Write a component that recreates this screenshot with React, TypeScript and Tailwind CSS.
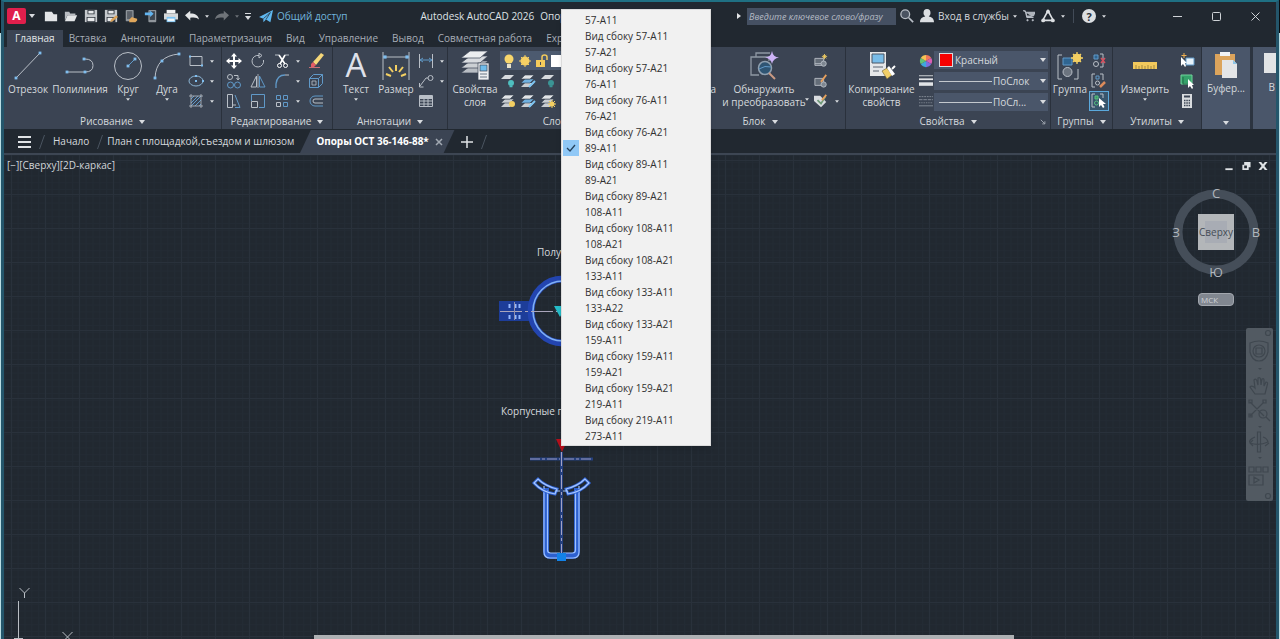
import React from 'react';

const BLUE = '#6099c8';
const LIGHT = '#b9bfc7';

const Caret: React.FC<{ className?: string }> = ({ className = 'w-1.5 h-1' }) => (
  <svg className={`shrink-0 ${className}`} viewBox="0 0 6 4" fill="#d8dbdf">
    <path d="M0 0h6L3 4z" />
  </svg>
);

const Dot: React.FC = () => <Caret className="w-1 h-[3px]" />;

const Icon: React.FC<{ size?: string; box?: number; children: React.ReactNode }> = ({
  size = 'w-4 h-4',
  box = 16,
  children,
}) => (
  <svg className={`shrink-0 ${size}`} viewBox={`0 0 ${box} ${box}`} fill="none" stroke={LIGHT} strokeWidth="1">
    {children}
  </svg>
);

const Big: React.FC<{ children: React.ReactNode }> = ({ children }) => (
  <Icon size="w-[30px] h-[30px]" box={30}>
    {children}
  </Icon>
);

const Points: React.FC<{ at: number[][]; r?: number }> = ({ at, r = 1.4 }) => (
  <g fill="#7fbdee" stroke="none">
    {at.map(([x, y]) => (
      <rect key={`${x}-${y}`} x={x - r} y={y - r} width={r * 2} height={r * 2} />
    ))}
  </g>
);

const Sheets: React.FC<{ blue?: boolean; children?: React.ReactNode }> = ({ blue, children }) => (
  <Icon>
    <g stroke="none">
      <path d="M5 10h9l-4 4H1z" fill="#c9cdd2" />
      <path d="M5 6h9l-4 4H1z" fill={blue ? '#6fb0e0' : '#c9cdd2'} stroke="#3b4453" strokeWidth=".6" />
      <path d="M5 2h9l-4 4H1z" fill="#e1e4e7" stroke="#3b4453" strokeWidth=".6" />
    </g>
    {children}
  </Icon>
);

const Flat: React.FC<{ color: string }> = ({ color }) => (
  <Icon>
    <path d="M5 2h9l-4 4H1z" fill="#d6d9dd" stroke="none" />
    <circle cx="11" cy="10" r="3" fill={color} stroke="none" />
    <path d="M9.500 13.500h3" stroke={color} strokeWidth="1.500" />
  </Icon>
);

interface PanelProps {
  title: string;
  className?: string;
  launcher?: boolean;
  children: React.ReactNode;
}

const Panel: React.FC<PanelProps> = ({ title, className = '', launcher, children }) => (
  <section className={`relative flex shrink-0 flex-col border-r border-[#2a313c] bg-[#3b4453] ${className}`}>
    <div className="flex h-[67px] items-start pt-1">{children}</div>
    <button className="flex h-[15px] items-center justify-center gap-1.5 leading-[15px]">
      {title}
      <Caret />
    </button>
    {launcher && (
      <svg className="absolute right-1 bottom-1 h-1.5 w-1.5" viewBox="0 0 8 8" stroke={LIGHT} fill="none">
        <path d="M1 1l5 5M6.500 3v3.500H3" />
      </svg>
    )}
  </section>
);

interface BigButtonProps {
  label: string;
  second?: string;
  caret?: boolean;
  className: string;
  children?: React.ReactNode;
}

const BigButton: React.FC<BigButtonProps> = ({ label, second, caret, className, children }) => (
  <button className={`flex shrink-0 flex-col items-center whitespace-nowrap ${className}`}>
    {children}
    <span className="mt-0.5 leading-[13px]">{label}</span>
    {second && <span className="leading-[13px]">{second}</span>}
    {caret && (
      <span className="mt-0.5">
        <Dot />
      </span>
    )}
  </button>
);

const Cell: React.FC<{ label: string; className?: string; children: React.ReactNode }> = ({
  label,
  className = 'w-6',
  children,
}) => (
  <button aria-label={label} className={`flex h-5 items-center justify-center ${className}`}>
    {children}
  </button>
);

const ColumnCaret: React.FC<{ count?: number }> = ({ count = 3 }) => (
  <div className="flex w-2 shrink-0 flex-col">
    {Array.from({ length: count }).map((_, i) => (
      <span key={i} className="flex h-5 items-center justify-center">
        <Dot />
      </span>
    ))}
  </div>
);

const quickAccess = [
  {
    label: 'Новый',
    icon: <path d="M1 3h8l2 3h4v8H1z" fill="#e3e5e7" stroke="none" />,
  },
  {
    label: 'Открыть',
    icon: (
      <g stroke="none">
        <path d="M1 3h5l1 2h6v2H4l-3 6z" fill="#b9bdc2" />
        <path d="M4 7h11l-3 7H1z" fill="#e3e5e7" />
      </g>
    ),
  },
  {
    label: 'Сохранить',
    icon: (
      <g stroke="none">
        <path d="M1 1h14v14H1z" fill="#c5c9cd" />
        <path d="M4 1h8v5H4zM3 9h10v6H3z" fill="#2b323b" />
        <path d="M5 2h6v3H5zM4 10h8v4H4z" fill="#e8eaec" />
      </g>
    ),
  },
  {
    label: 'Сохранить как',
    icon: (
      <g stroke="none">
        <path d="M1 1h14v14H1z" fill="#c5c9cd" />
        <path d="M4 1h8v5H4zM3 9h10v6H3z" fill="#2b323b" />
        <path d="M5 2h6v3H5zM4 10h6v4H4z" fill="#e8eaec" />
        <path d="M7 15l1-3 6-5 2 2-6 5z" fill="#dba35a" />
      </g>
    ),
  },
  {
    label: 'Открыть из веб',
    icon: (
      <g stroke="none">
        <rect x="2" y="1" width="9" height="13" rx="1" fill="#8f959b" />
        <rect x="3.500" y="2.500" width="6" height="9" fill="#5b6169" />
        <path d="M6 15v-3l3-3 2 1 4 1v2l-2 2z" fill="#e0a75c" />
      </g>
    ),
  },
  {
    label: 'Сохранить в веб',
    icon: (
      <g stroke="none">
        <rect x="5" y="1" width="9" height="14" rx="1" fill="#8f959b" />
        <rect x="6.500" y="2.500" width="6" height="10" fill="#3d4650" />
        <path d="M1 4h6V2l4 3.500L7 9V7H1z" fill="#62b4ef" />
      </g>
    ),
  },
  {
    label: 'Печать',
    icon: (
      <g stroke="none">
        <path d="M3 1h10v4H3z" fill="#f1f2f3" />
        <path d="M0 5h16v7H0z" fill="#d5d8da" />
        <path d="M3 9h10v6H3z" fill="#7cc3f3" />
        <path d="M4 11h8v3H4z" fill="#eef6fb" />
      </g>
    ),
  },
];

const tabs = ['Вставка', 'Аннотации', 'Параметризация', 'Вид', 'Управление', 'Вывод', 'Совместная работа', 'Express'];

const menuItems = [
  '57-А11',
  'Вид сбоку 57-А11',
  '57-А21',
  'Вид сбоку 57-А21',
  '76-А11',
  'Вид сбоку 76-А11',
  '76-А21',
  'Вид сбоку 76-А21',
  '89-А11',
  'Вид сбоку 89-А11',
  '89-А21',
  'Вид сбоку 89-А21',
  '108-А11',
  'Вид сбоку 108-А11',
  '108-А21',
  'Вид сбоку 108-А21',
  '133-А11',
  'Вид сбоку 133-А11',
  '133-А22',
  'Вид сбоку 133-А21',
  '159-А11',
  'Вид сбоку 159-А11',
  '159-А21',
  'Вид сбоку 159-А21',
  '219-А11',
  'Вид сбоку 219-А11',
  '273-А11',
];

const TitleBar: React.FC = () => (
  <header className="flex h-7 shrink-0 items-center pl-[3px]">
    <button aria-label="Меню приложения" className="flex h-4 w-[19px] items-center justify-center rounded-xs bg-[#e01f4c] text-[12px] leading-4 font-bold text-white">
      A
    </button>
    <span className="flex w-[11px] justify-center">
      <Caret />
    </span>
    <div className="ml-1.5 flex gap-1">
      {quickAccess.map((item) => (
        <button key={item.label} aria-label={item.label} className="flex w-4 justify-center">
          <Icon size="w-3.5 h-3.5">{item.icon}</Icon>
        </button>
      ))}
    </div>
    <button aria-label="Отменить" className="ml-1.5 flex items-center gap-1.5">
      <Icon size="w-3.5 h-3.5">
        <path d="M0 7l6-5v3c6 0 9 2 10 7-2-2-5-3-10-2v3z" fill="#e3e5e7" stroke="none" />
      </Icon>
      <Dot />
    </button>
    <button aria-label="Повторить" className="ml-1.5 flex items-center gap-1.5 opacity-40">
      <Icon size="w-3.5 h-3.5">
        <path d="M16 7l-6-5v3C4 5 1 7 0 12c2-2 5-3 10-2v3z" fill="#e3e5e7" stroke="none" />
      </Icon>
      <Dot />
    </button>
    <button aria-label="Настройка" className="ml-1.5 flex flex-col items-center gap-0.5 border-t border-[#d8dbdf] pt-0.5">
      <Caret />
    </button>
    <button className="ml-2 flex items-center gap-1 whitespace-nowrap text-[#71b5dc]">
      <Icon size="w-3.5 h-3.5">
        <path d="M0 9L16 1l-3 14-5-3-3 3v-4z" fill="#5fb8f0" stroke="none" />
        <path d="M5 11l8-7-5 8" stroke="#212830" strokeWidth=".8" />
      </Icon>
      Общий доступ
    </button>
    <h1 className="ml-[73px] flex gap-1.5 whitespace-nowrap text-[#dfe2e5]">
      <span>Autodesk AutoCAD 2026</span>
      <span>Опоры</span>
    </h1>
    <div className="ml-auto flex items-center">
      <svg className="mr-1.5 h-1.5 w-1" viewBox="0 0 4 6" fill="#e3e5e7">
        <path d="M0 0v6l4-3z" />
      </svg>
      <input
        aria-label="Поиск"
        placeholder="Введите ключевое слово/фразу"
        className="h-[17px] w-[149px] bg-[#455062] px-0.5 font-['Open_Sans','Noto_Sans',sans-serif] text-[9px] italic placeholder:text-[#b4bac3]"
      />
      <button aria-label="Найти" className="ml-1">
        <Icon size="w-3.5 h-3.5">
          <circle cx="6" cy="6" r="5" fill="#4a5361" strokeWidth="1.500" />
          <path d="M10 10l5 5" strokeWidth="2" />
        </Icon>
      </button>
      <button className="ml-1.5 flex items-center gap-1 whitespace-nowrap">
        <Icon size="w-3.5 h-3.5">
          <path d="M8 0a4 4.500 0 014 4.500c0 2-1 3-2 4 3 .5 6 2 6 6.500H0c0-4.500 3-6 6-6.500-1-1-2-2-2-4A4 4.500 0 018 0z" fill="#dcdfe2" stroke="none" />
        </Icon>
        Вход в службы
        <Dot />
      </button>
      <button aria-label="Корзина" className="ml-1.5">
        <Icon size="w-3 h-3">
          <path d="M0 1h3l2 9h9M4 3h12l-2 5H5z" fill="#aeb3b9" strokeWidth="1.300" />
          <circle cx="6" cy="13.500" r="1" fill={LIGHT} />
          <circle cx="13" cy="13.500" r="1" fill={LIGHT} />
        </Icon>
      </button>
      <button aria-label="Autodesk App Store" className="ml-1.5 flex items-center gap-1.5">
        <Icon size="w-3.5 h-3.5">
          <path d="M8 2L2 13h12z" stroke="#dcdfe2" strokeWidth="1.800" />
          <g fill="#dcdfe2" stroke="none">
            <circle cx="8" cy="3" r="2.200" />
            <circle cx="2.500" cy="13" r="2.200" />
            <circle cx="13.500" cy="13" r="2.200" />
          </g>
        </Icon>
        <Dot />
      </button>
      <span className="mx-2 h-3.5 w-px bg-[#424b57]" />
      <button aria-label="Справка" className="flex items-center gap-1.5">
        <span className="flex h-3.5 w-3.5 items-center justify-center rounded-full bg-[#dcdfe2] text-[11px] leading-none font-bold text-[#2a313a]">?</span>
        <Dot />
      </button>
      <div className="mr-[15px] ml-[66px] flex items-center gap-[28px]">
        {['M1 5.500h9', 'M2.500 1.500h6q1 0 1 1v6q0 1-1 1h-6q-1 0-1-1v-6q0-1 1-1z', 'M1.500 1.500l8 8M9.500 1.500l-8 8'].map((d, i) => (
          <button key={d} aria-label={['Свернуть', 'Развернуть', 'Закрыть'][i]}>
            <svg className="h-[11px] w-[11px]" viewBox="0 0 11 11" fill="none" stroke="#cfd3d7">
              <path d={d} />
            </svg>
          </button>
        ))}
      </div>
    </div>
  </header>
);

const DrawPanel: React.FC = () => (
  <Panel title="Рисование" className="w-[218px]">
    <BigButton label="Отрезок" className="ml-0.5 w-11">
      <Big>
        <path d="M3 27L27 2" />
        <Points at={[[3, 27], [27, 2]]} />
      </Big>
    </BigButton>
    <BigButton label="Полилиния" className="ml-0.5 w-14">
      <Big>
        <path d="M2 21h18q8 0 8-6.500T20 8" />
        <Points at={[[2, 21], [20, 21], [19, 8]]} />
      </Big>
    </BigButton>
    <BigButton label="Круг" caret className="w-10">
      <Big>
        <circle cx="15" cy="15" r="13.500" />
        <path d="M15 15l7-7" stroke={BLUE} />
        <Points at={[[15, 15], [22, 8]]} />
      </Big>
    </BigButton>
    <BigButton label="Дуга" caret className="w-[38px]">
      <Big>
        <path d="M3 27Q4 5 27 3" />
        <Points at={[[3, 27], [10, 10], [27, 3]]} />
      </Big>
    </BigButton>
    <div className="flex w-5 flex-col">
      <Cell label="Прямоугольник" className="w-5">
        <Icon>
          <path d="M2 3.500h12v9H2z" />
          <Points at={[[2, 3.5], [14, 12.5]]} r={1} />
        </Icon>
      </Cell>
      <Cell label="Эллипс" className="w-5">
        <Icon>
          <ellipse cx="8" cy="8" rx="7" ry="5" stroke="#8cb5d4" />
          <Points at={[[8, 8], [15, 8], [8, 3]]} r={1} />
        </Icon>
      </Cell>
      <Cell label="Штриховка" className="w-5">
        <Icon>
          <path d="M3 6l3-3M3 10l7-7M3 13L13 3M7 13l6-6M11 13l2-2" stroke={BLUE} />
          <path d="M3 1v14M13 1v14M1 3h14M1 13h14" strokeWidth=".8" />
        </Icon>
      </Cell>
    </div>
    <span className="w-0.5" />
    <ColumnCaret />
  </Panel>
);

const EditPanel: React.FC = () => (
  <Panel title="Редактирование" className="w-[111px]">
    <div className="flex flex-col">
      <Cell label="Перенести">
        <Icon>
          <path d="M8 2v12M2 8h12" strokeWidth="2" stroke="#fff" />
          <path d="M8 0l3 3.500H5zM8 16l3-3.500H5zM0 8l3.500-3v6zM16 8l-3.500-3v6z" fill="#fff" stroke="none" />
        </Icon>
      </Cell>
      <Cell label="Копировать">
        <Icon>
          <circle cx="4" cy="4" r="2.500" />
          <circle cx="4.500" cy="12" r="3" stroke={BLUE} />
          <circle cx="11.500" cy="12" r="3" stroke={BLUE} />
          <path d="M8 2.500h4v4M10.500 5l1.500 2 1.500-2" />
        </Icon>
      </Cell>
      <Cell label="Растянуть">
        <Icon>
          <path d="M1.500 1.500h5v13h-5z" />
          <path d="M9 2l5 12.500H9" stroke={BLUE} />
          <path d="M6 12h4" />
        </Icon>
      </Cell>
    </div>
    <div className="flex flex-col">
      <Cell label="Повернуть">
        <Icon>
          <path d="M9 2.500A5.800 5.800 0 1013.500 7M9 0v5l3-2.500z" />
        </Icon>
      </Cell>
      <Cell label="Зеркало">
        <Icon>
          <path d="M6.500 3v11H1z" />
          <path d="M9.500 3v11H15z" stroke={BLUE} />
          <path d="M8 1v14" strokeWidth=".8" />
        </Icon>
      </Cell>
      <Cell label="Масштаб">
        <Icon>
          <path d="M1.500 8V1.500h13v13H9" stroke={BLUE} />
          <path d="M1.500 8.500h6v6h-6z" />
        </Icon>
      </Cell>
    </div>
    <div className="flex flex-col">
      <Cell label="Обрезать">
        <Icon>
          <path d="M1 2h4M11 2h4" />
          <path d="M5 2l6 9M11 2L6 11" stroke="#fff" strokeWidth="1.600" />
          <circle cx="5.500" cy="12.500" r="2" stroke="#fff" />
          <circle cx="11.500" cy="12.500" r="2" stroke="#fff" />
        </Icon>
      </Cell>
      <Cell label="Сопряжение">
        <Icon>
          <path d="M2 15V11Q3 2 11 2" stroke={BLUE} strokeWidth="1.300" />
          <path d="M11 2h4" />
        </Icon>
      </Cell>
      <Cell label="Массив">
        <Icon>
          <path d="M2.500 2.500h4v4h-4zM9.500 2.500h4v4h-4zM9.500 9.500h4v4h-4z" stroke={BLUE} />
          <path d="M2.500 9.500h4v4h-4z" />
        </Icon>
      </Cell>
    </div>
    <ColumnCaret />
    <div className="flex flex-col">
      <Cell label="Стереть" className="w-7">
        <Icon>
          <path d="M5 9l8-9 3 2-8 10z" fill="#f5d779" stroke="none" />
          <path d="M3 11l2-2 3 3-2 2H3z" fill="#e45b65" stroke="none" />
          <path d="M1 14.500h11" stroke="#c76e75" />
        </Icon>
      </Cell>
      <Cell label="Расчленить" className="w-7">
        <Icon>
          <path d="M1.500 5.500h9v9h-9z" stroke={BLUE} />
          <path d="M1.500 5.500l4-4h9v9l-4 4M10.500 5.500l4-4" stroke={BLUE} />
          <path d="M4 8h4v4H4z" strokeWidth=".8" />
        </Icon>
      </Cell>
      <Cell label="Подобие" className="w-7">
        <Icon>
          <path d="M15 3H7a5 5 0 000 10h8" stroke={BLUE} />
          <path d="M15 6H7a2 2 0 000 4h8" />
        </Icon>
      </Cell>
    </div>
  </Panel>
);

const AnnotationPanel: React.FC = () => (
  <Panel title="Аннотации" className="w-[115px]">
    <BigButton label="Текст" caret className="ml-[3px] w-10">
      <svg className="h-[30px] w-[30px]" viewBox="0 0 30 30" textAnchor="middle">
        <text x="15" y="26" fontSize="33" fontWeight="500" fill="#dfe1ea">A</text>
      </svg>
    </BigButton>
    <BigButton label="Размер" className="w-10">
      <Big>
        <path d="M2 1v28M28 1v28M2 6h26" />
        <Points at={[[4, 6], [26, 6]]} r={1.6} />
        <path d="M15 14v6M8 16l4 5M22 16l-4 5M5 23l5 2M25 23l-5 2" stroke="#f3cf62" strokeWidth="2" />
      </Big>
    </BigButton>
    <div className="flex flex-col">
      <Cell label="Линейный" className="w-5">
        <Icon>
          <path d="M1.500 1v14M14.500 1v14" />
          <path d="M2 7h12M5 5L2 7l3 2M11 5l3 2-3 2" stroke={BLUE} />
        </Icon>
      </Cell>
      <Cell label="Выноска" className="w-5">
        <Icon>
          <circle cx="12.500" cy="5" r="2.500" />
          <path d="M10 5H8l-6 8M1.500 10v4h4" />
        </Icon>
      </Cell>
      <Cell label="Таблица" className="w-5">
        <Icon>
          <path d="M1.500 2.500h13v11h-13zM1.500 5.500h13M1.500 8h13M1.500 11h13M6 5.500v8M10 5.500v8" />
          <path d="M1.500 4h13" strokeWidth="2" />
        </Icon>
      </Cell>
    </div>
    <span className="w-0.5" />
    <ColumnCaret count={2} />
  </Panel>
);

const LayerPanel: React.FC = () => (
  <Panel title="Слои" className="min-w-[120px] flex-1 overflow-hidden">
    <BigButton label="Свойства" second="слоя" className="ml-0.5 w-[50px]">
      <Big>
        <g stroke="#3b4453" strokeWidth=".7">
          <path d="M10 15h18l-8 7H1z" fill="#b8bdc3" />
          <path d="M10 10h18l-8 7H1z" fill="#ccd0d4" />
          <path d="M10 5h18l-8 7H1z" fill="#d9dce0" />
          <path d="M10 0h18l-8 7H1z" fill="#eceef0" />
          <rect x="18" y="12" width="11" height="17" fill="#edeff1" />
          <rect x="20" y="14" width="7" height="6" fill="#6fbceb" />
        </g>
        <path d="M20 23h7M20 26h7" stroke="#697484" />
      </Big>
    </BigButton>
    <div className="flex flex-col">
      <div className="flex h-[19px] w-[170px] items-center bg-[#4c5a6f] pl-px">
        <Icon>
          <circle cx="8" cy="6" r="4.500" fill="#f7d66c" stroke="none" />
          <path d="M6 11h4v4H6z" fill="#e8e3cc" stroke="none" />
        </Icon>
        <Icon>
          <circle cx="8" cy="8" r="4.500" fill="#f5cf64" stroke="none" />
          <path d="M8 2v12M2 8h12M4 4l8 8M12 4l-8 8" stroke="#f5cf64" />
        </Icon>
        <Icon>
          <path d="M3 7h9v7H3z" fill="#f3cb5c" stroke="none" />
          <path d="M9 7V4q0-2 2.500-2T14 4v3" stroke="#f3cb5c" strokeWidth="1.500" />
          <path d="M7.500 9v3" stroke="#464e59" />
        </Icon>
        <span className="ml-0.5 h-3 w-3 bg-white" />
      </div>
      <div className="mt-px flex h-5 items-center gap-1">
        <Flat color="#4fbfc0" />
        <Sheets blue>
          <path d="M9 14l6-6" stroke="#7dc4f1" strokeWidth="2" />
        </Sheets>
        <Flat color="#3b9495" />
      </div>
      <div className="flex h-5 items-center gap-1">
        <Sheets>
          <circle cx="12" cy="11" r="3" fill="#f3cf62" stroke="none" />
        </Sheets>
        <Sheets blue>
          <path d="M9 14l6-6" stroke="#7dc4f1" strokeWidth="2" />
        </Sheets>
        <Sheets>
          <circle cx="12" cy="11" r="2.500" fill="#f3cf62" stroke="none" />
          <path d="M12 7v8M8 11h8M9 8l6 6M15 8l-6 6" stroke="#f3cf62" />
        </Sheets>
      </div>
    </div>
  </Panel>
);

const BlockPanel: React.FC = () => (
  <Panel title="Блок" className="w-[171px]">
    <BigButton label="Вставка" className="w-[44px]">
      <Big>
        <path d="M4 4h22v22H4z" />
      </Big>
    </BigButton>
    <button className="relative flex w-[90px] flex-col items-center whitespace-nowrap">
      <Big>
        <path d="M7 6V2h14M4 6h-2v18h8M2 6h18v4" stroke="#8f98a4" strokeWidth="1.300" />
        <circle cx="16" cy="17" r="6.500" fill="#2f5573" stroke="#8fa0b0" strokeWidth="1.500" />
        <path d="M10 18q6-4 12-2" stroke={BLUE} />
        <path d="M20 22l6 6" stroke="#c99a83" strokeWidth="2" />
        <path d="M23 0q1 6 7 6.500-6 1-7 6.500-1-5.500-7-6.500 6-.5 7-6.500z" fill="#cdb4f7" stroke="none" />
      </Big>
      <span className="mt-0.5 leading-[13px]">Обнаружить</span>
      <span className="leading-[13px]">и преобразовать</span>
      <span className="absolute right-0 bottom-2">
        <Dot />
      </span>
    </button>
    <div className="flex flex-col">
      <Cell label="Создать блок">
        <Icon size="w-3.5 h-3.5">
          <path d="M1 5h10v8H1zM1 11h8" fill="#646d78" />
          <circle cx="11" cy="11" r="3" fill="#7e8791" />
          <path d="M12 0v6M9 3h6M10 1l4 4M14 1l-4 4" stroke="#f3cf62" />
        </Icon>
      </Cell>
      <Cell label="Редактировать блок">
        <Icon size="w-3.5 h-3.5">
          <path d="M1 5h10v8H1z" fill="#646d78" />
          <circle cx="11" cy="12" r="3" fill="#7e8791" />
          <path d="M8 9l6-8" stroke="#e8a05c" strokeWidth="2" />
        </Icon>
      </Cell>
      <Cell label="Атрибуты">
        <Icon size="w-3.5 h-3.5">
          <path d="M0 2h7l7 7-6 6-8-7z" fill="#d9dce0" stroke="none" />
          <path d="M4 7l4 4 5-8" stroke="#6f9a79" strokeWidth="2" />
          <path d="M9 7l5-6" stroke="#e8a05c" strokeWidth="2" />
        </Icon>
      </Cell>
    </div>
    <div className="flex flex-col pt-10 pl-0.5">
      <span className="flex h-5 items-center">
        <Dot />
      </span>
    </div>
  </Panel>
);

const Combo: React.FC<{ label: string; value: string; swatch?: boolean }> = ({ label, value, swatch }) => (
  <div className="relative h-[18px]">
    <select
      aria-label={label}
      className={`h-full w-full appearance-none bg-[#4a566a] leading-[18px] ${swatch ? 'pl-[21px]' : 'pl-[59px]'}`}
    >
      <option>{value}</option>
    </select>
    {swatch ? (
      <span className="pointer-events-none absolute top-0.5 left-[5px] h-3.5 w-3.5 border border-[#d6dade] bg-[#f80000]" />
    ) : (
      <span className="pointer-events-none absolute top-[9px] left-[5px] h-px w-[53px] bg-[#c3c8ce]" />
    )}
    <span className="pointer-events-none absolute top-0 right-0.5 flex h-full items-center">
      <Caret />
    </span>
  </div>
);

const PropertiesPanel: React.FC = () => (
  <Panel title="Свойства" launcher className="w-[205px]">
    <BigButton label="Копирование" second="свойств" className="w-[71px]">
      <Big>
        <path d="M3 1h16v24H3z" fill="#e5e7e9" stroke="none" />
        <path d="M5 3h12v9H5z" fill="#79bde9" stroke="#4b5766" />
        <path d="M6 16h10M6 20h6" stroke="#5b6572" />
        <path d="M15 20l5-3 5 7-5 4z" fill="#f1cf68" stroke="#6b5e37" strokeWidth=".6" />
        <path d="M20 17l2-2 6 8-3 2z" fill="#fff" stroke="none" />
        <path d="M25 18l3-3" stroke="#fff" strokeWidth="2" />
      </Big>
    </BigButton>
    <div className="flex flex-col">
      <Cell label="Цвет" className="w-[17px]">
        <Icon size="w-3.5 h-3.5">
          <g stroke="none">
            <path d="M8 8V1a7 7 0 016 3.500z" fill="#f0785a" />
            <path d="M8 8l6-3.500a7 7 0 010 7z" fill="#d95fb4" />
            <path d="M8 8l6 3.500A7 7 0 018 15z" fill="#7a6fe0" />
            <path d="M8 8v7a7 7 0 01-6-3.500z" fill="#3fa8dc" />
            <path d="M8 8l-6 3.500a7 7 0 010-7z" fill="#64c274" />
            <path d="M8 8L2 4.500A7 7 0 018 1z" fill="#f6c254" />
          </g>
        </Icon>
      </Cell>
      <Cell label="Вес линий" className="w-[17px]">
        <Icon size="w-3.5 h-3.5">
          <g stroke="#e0e3e6">
            <path d="M0 2h16" />
            <path d="M0 6h16" strokeWidth="2" />
            <path d="M0 11.500h16" strokeWidth="4" />
          </g>
        </Icon>
      </Cell>
      <Cell label="Тип линий" className="w-[17px]">
        <Icon size="w-3.5 h-3.5">
          <path d="M0 3h16" strokeDasharray="2 1" stroke="#8b939e" />
          <path d="M0 6.500h16" strokeDasharray="4 1" stroke="#8b939e" />
          <path d="M0 10h16" strokeDasharray="1 1" stroke="#8b939e" />
          <path d="M0 13.500h16" stroke="#8b939e" />
        </Icon>
      </Cell>
    </div>
    <div className="mr-0.5 flex flex-1 flex-col gap-[3px]">
      <Combo label="Цвет объекта" value="Красный" swatch />
      <Combo label="Вес линий объекта" value="ПоСлок" />
      <Combo label="Тип линий объекта" value="ПоСл..." />
    </div>
  </Panel>
);

const GroupPanel: React.FC = () => (
  <Panel title="Группы" className="w-[62px]">
    <BigButton label="Группа" className="w-[38px]">
      <Big>
        <path d="M7 4H3v24h4M19 28h4V18" />
        <path d="M8 7h9v7H8z" fill="#2f6591" stroke={BLUE} />
        <circle cx="12.500" cy="21" r="4.500" fill="#6c747f" />
        <g stroke="#f3cf62">
          <circle cx="22" cy="7" r="4" fill="#f3cf62" />
          <path d="M22 1v12M16 7h12M18 3l8 8M26 3l-8 8" strokeWidth="1.300" />
        </g>
      </Big>
    </BigButton>
    <div className="flex flex-col">
      <Cell label="Разгруппировать" className="w-5">
        <Icon>
          <path d="M3 2h4v4H3z" fill="#2f6591" stroke={BLUE} />
          <circle cx="5" cy="11" r="2.500" />
          <path d="M9 1h3v13H9" />
          <path d="M10 5l4 5M14 5l-4 5" stroke="#d8505f" strokeWidth="1.500" />
        </Icon>
      </Cell>
      <Cell label="Редактирование группы" className="w-5">
        <Icon>
          <path d="M4 1H1v13h3M9 1h3v6" />
          <path d="M5 3h3v3H5z" stroke={BLUE} />
          <circle cx="6.500" cy="10" r="2" />
          <path d="M9 14l5-5" stroke="#dc8b5b" strokeWidth="2.500" />
        </Icon>
      </Cell>
      <Cell label="Выбор групп" className="w-5 border border-[#5ba9dc] bg-[#38556c]">
        <Icon>
          <path d="M4 1H1v13h3M9 1h3v4" />
          <path d="M4 3h3v3H4z" stroke="#58bf82" fill="#3c9763" />
          <circle cx="5.500" cy="10" r="2" stroke="#58bf82" />
          <path d="M8 5v9l2-2 2 3 1.500-1-1.500-3h3z" fill="#fff" stroke="none" />
        </Icon>
      </Cell>
    </div>
  </Panel>
);

const UtilityPanel: React.FC = () => (
  <Panel title="Утилиты" className="w-[89px]">
    <BigButton label="Измерить" caret className="w-16">
      <Big>
        <path d="M3 11h24v7H3z" fill="#f2c95c" stroke="none" />
        <path d="M6 14v4M9 15v3M12 14v4M15 15v3M18 14v4M21 15v3M24 14v4" stroke="#a3893f" />
      </Big>
    </BigButton>
    <div className="flex flex-col">
      <Cell label="Быстрый выбор" className="w-5">
        <Icon>
          <path d="M7 5h8v7H7z" fill="#e8f3fb" stroke={BLUE} />
          <path d="M2 4v9l2-2 2 3 1-1-1-3h2z" fill="#fff" stroke="none" />
          <path d="M5 0v5M2.500 2.500h5" stroke="#f0b050" />
        </Icon>
      </Cell>
      <Cell label="Выбрать все" className="w-5">
        <Icon>
          <path d="M2 2h11v9H2z" fill="#35a26a" stroke="#70d39b" />
          <path d="M4 4v7h7" stroke="#1f6844" />
          <path d="M9 6v9l2-2 2 3 1-1-1-3h2z" fill="#fff" stroke="none" />
        </Icon>
      </Cell>
      <Cell label="Калькулятор" className="w-5">
        <Icon>
          <path d="M3 1h10v14H3z" fill="#d9dcdf" stroke="none" />
          <path d="M5 3.500h6" stroke="#3b4453" strokeWidth="2" />
          <path d="M5 7.500h6M5 10h6M5 12.500h6" stroke="#3b4453" strokeWidth="1.500" strokeDasharray="1.500 .8" />
        </Icon>
      </Cell>
    </div>
  </Panel>
);

const Ribbon: React.FC = () => (
  <div className="flex shrink-0 overflow-hidden bg-[#2c3440]">
    <DrawPanel />
    <EditPanel />
    <AnnotationPanel />
    <LayerPanel />
    <BlockPanel />
    <PropertiesPanel />
    <GroupPanel />
    <UtilityPanel />
    <button className="mr-[3px] flex w-12 shrink-0 flex-col items-center bg-[#4a566a] pt-1">
      <Big>
        <path d="M4 3h20v21H4z" fill="#dca45c" stroke="none" />
        <path d="M9 1h10v4H9z" fill="#f1f2f4" stroke="none" />
        <path d="M11 9h11l4 4v14H11z" fill="#e4e5e7" stroke="none" />
        <path d="M22 9l4 4h-4z" fill="#8ec6e8" stroke="none" />
      </Big>
      <span className="mt-px leading-[13px]">Буфер...</span>
      <span className="mt-auto mb-1">
        <Caret />
      </span>
    </button>
    <button className="flex w-[23px] shrink-0 flex-col items-end overflow-hidden bg-[#4a566a] pt-1.5">
      <span className="h-5 w-3 bg-[#e2e4e6]" />
      <span className="mt-2 mr-px leading-[13px]">В</span>
    </button>
  </div>
);

const Slash: React.FC = () => (
  <svg className="h-4 w-1.5 shrink-0" viewBox="0 0 6 16" stroke="#4b5561">
    <path d="M5.500 1L.5 15" />
  </svg>
);

const DocumentTabs: React.FC = () => (
  <nav className="flex h-6 shrink-0 items-center pt-px whitespace-nowrap">
    <button aria-label="Меню файлов" className="mr-2 ml-3.5 flex flex-col gap-[3px]">
      <span className="h-0.5 w-[13px] bg-[#dfe2e5]" />
      <span className="h-0.5 w-[13px] bg-[#dfe2e5]" />
      <span className="h-0.5 w-[13px] bg-[#dfe2e5]" />
    </button>
    <Slash />
    <a href="#start" className="mx-2">Начало</a>
    <Slash />
    <a href="#plan" className="mx-1">План с площадкой,съездом и шлюзом</a>
    <div className="relative ml-0.5 flex h-full items-center">
      <svg className="absolute h-full w-full" viewBox="0 0 100 20" preserveAspectRatio="none" fill="#3b4453">
        <path d="M7 0h93l-7 20H0z" />
      </svg>
      <a href="#current" className="relative ml-4 font-['Noto_Sans',sans-serif] font-bold text-white">Опоры ОСТ 36-146-88*</a>
      <button aria-label="Закрыть вкладку" className="relative mr-3 ml-1.5">
        <svg className="h-2 w-2" viewBox="0 0 8 8" stroke="#a2a9b2" strokeWidth="1.500">
          <path d="M1 1l6 6M7 1L1 7" />
        </svg>
      </button>
    </div>
    <button aria-label="Новая вкладка" className="mr-2 ml-1.5">
      <svg className="h-3 w-3" viewBox="0 0 12 12" stroke="#dfe2e5" strokeWidth="1.500">
        <path d="M6 0v12M0 6h12" />
      </svg>
    </button>
    <Slash />
  </nav>
);

const Drawing: React.FC = () => (
  <svg className="absolute top-0 left-0 h-full w-full" fill="none">
    <defs>
      <pattern id="minor" width="6.800" height="6.800" patternUnits="userSpaceOnUse">
        <path d="M.5 0v6.800M0 .5h6.800" stroke="#232b34" />
      </pattern>
      <pattern id="major" x="7" y="5" width="34" height="34" patternUnits="userSpaceOnUse">
        <path d="M.5 0v34M0 .5h34" stroke="#29313b" />
      </pattern>
    </defs>
    <rect width="100%" height="100%" fill="url(#minor)" />
    <rect width="100%" height="100%" fill="url(#major)" />
    <g transform="translate(-4 -155)">
      {/* clamp, top view */}
      <path d="M499 301h31v20h-31z" fill="#1d3d99" />
      <circle cx="563" cy="311" r="32" stroke="#2345b0" strokeWidth="7" />
      <circle cx="563" cy="311" r="30" stroke="#7fb0f5" strokeWidth="1.600" />
      <path d="M509.500 304v4M515.500 304v4M519.500 304v4M509.500 315v4M515.500 315v4M519.500 315v4" stroke="#93b8ff" strokeWidth="2" />
      <path d="M500 311.500h61" stroke="#a9a5bb" strokeDasharray="22 3 3 3" />
      <path d="M514.500 302v18" stroke="#8e8cab" />
      <path d="M554 306h12l-6 11z" fill="#25bdc9" />

      {/* support, front view */}
      <path d="M556 439h12l-6 13z" fill="#b6101c" />
      <path d="M530 459h63" stroke="#24407f" strokeWidth="3" />
      <path d="M530 459h63" stroke="#9c9ac0" strokeDasharray="10 2 3 2" />
      <path d="M546 488v63q0 5 5 5h21q5 0 5-5v-63" stroke="#2d60cf" strokeWidth="6" />
      <path d="M544 486v66q0 6 6 6h23q6 0 6-6v-66M547.500 490v60q0 3 3 3h22q3 0 3-3v-60" stroke="#9cc0ff" strokeWidth="1.200" />
      <path d="M534 483l4-4q7 7 19 10l-2 5q-13-2-21-11zM589 483l-4-4q-7 7-19 10l2 5q13-2 21-11z" stroke="#2d60cf" strokeWidth="3" />
      <path d="M534 483l4-4q7 7 19 10l-2 5q-13-2-21-11zM589 483l-4-4q-7 7-19 10l2 5q13-2 21-11zM555 491h13" stroke="#a4c5ff" strokeWidth="1.200" />
      <path d="M561.500 452v104" stroke="#24407f" strokeWidth="3" />
      <path d="M561.500 452v104" stroke="#a4a2c4" strokeDasharray="14 3 3 3" />
      <path d="M557 553h9v8h-9z" fill="#1282e8" />

      {/* axes */}
      <path d="M18.500 601v38M14 638.500h9" stroke="#b9bec4" />
      <path d="M19.500 588l5 5 5-5M24.500 593v5M62.500 632l10 10M72.500 632l-10 10" stroke="#b9bec4" />
    </g>
  </svg>
);

const ViewCube: React.FC = () => (
  <div className="absolute top-7 right-3.5 flex w-[92px] flex-col items-center">
    <svg className="h-[98px] w-[92px]" viewBox="0 0 92 98" textAnchor="middle">
      <circle cx="46" cy="49" r="38" fill="none" stroke="#454e59" strokeWidth="9" />
      <rect x="28" y="31" width="36" height="36" fill="#b3b6b9" />
      <rect x="35" y="38" width="22" height="22" fill="#a8acb4" />
      <text x="46" y="53" fontSize="10" fill="#454c56">Сверху</text>
      <g fontSize="13" fill="#b1b6bc">
        <text x="46" y="15">С</text>
        <text x="46" y="94">Ю</text>
        <text x="6" y="54">З</text>
        <text x="86" y="54">В</text>
      </g>
    </svg>
    <button className="mt-3 h-[13px] w-9 rounded-sm border border-[#a2a7ae] bg-[#818790] pl-0.5 text-left text-[8px] leading-[11px] text-[#d0d4d9]">
      МСК
    </button>
  </div>
);

const NavigationBar: React.FC = () => (
  <div className="absolute top-[173px] right-[3px] flex w-[27px] flex-col items-center rounded-xs bg-[#525a62]">
    <svg className="h-[173px] w-[27px]" viewBox="0 0 27 173" fill="none" stroke="#3f474f" strokeWidth="1.200">
      <circle cx="22" cy="5" r="2.500" />
      <circle cx="22" cy="168" r="2.500" />
      <path d="M4 15q9-4 18 0v9q-2 9-9 9t-9-9z" />
      <circle cx="13" cy="23" r="6" />
      <path d="M10 20h6v6h-6z" />
      <path d="M9 66l-5-7q2-2 5 1l-1-8q2-2 3 1l1 4V50q2-1 2.500 1l.5 6 1-6q2-1 2 1v6l2-4q2 0 1.500 2L19 66z" />
      <path d="M4 74l14 14M4 88l14-14M3 72h3v3H3zM17 72h3v3h-3zM3 86h3v3H3z" />
      <circle cx="17" cy="86" r="4" />
      <path d="M20 89l4 4" />
      <path d="M11.500 104v20h3v-20z" />
      <path d="M9 109q-7 3-5 6 9 3 18-1-1-4-5-5M19 118l4-3M7 112l-3 3 3 3" />
      <path d="M3 139h5v5H3zM10 139h5v5h-5zM17 139h5v5h-5zM3 147h14v10H3zM8 149v6l5-3z" />
      <path d="M12 40h4l-2 2zM12 98h4l-2 2zM12 129h4l-2 2z" fill="#3f474f" stroke="none" />
    </svg>
  </div>
);

const Canvas: React.FC = () => (
  <main className="relative min-h-0 flex-1 overflow-hidden border-t-2 border-[#3d4653] bg-[#212830]">
    <Drawing />
    <div className="relative flex items-center justify-between pt-[3px] pr-2 pl-[3px] text-[#d2d6da]">
      <span>[−][Сверху][2D-каркас]</span>
      <div className="flex gap-[7px]">
        {['M1 8h8v2H1z', 'M3 1h7v6H8v3H1V4h2zM3 5v3h3V5z', 'M0 1h3l2 2.500L7 1h3L6.500 5.500 10 10H7L5 7.500 3 10H0l3.500-4.500z'].map((d, i) => (
          <button key={d} aria-label={['Свернуть вид', 'Восстановить вид', 'Закрыть вид'][i]}>
            <svg className="h-2.5 w-2.5" viewBox="0 0 10 11" fill="#dfe3e6" fillRule="evenodd">
              <path d={d} />
            </svg>
          </button>
        ))}
      </div>
    </div>
    <span className="absolute top-[90px] left-[533px]">Полухомут</span>
    <span className="absolute top-[249px] left-[497px] whitespace-nowrap">Корпусные приварные</span>
    <ViewCube />
    <NavigationBar />
    <div className="absolute bottom-0 left-[310px] h-1 w-[55%] bg-[#aeb1b4]" />
  </main>
);

const ContextMenu: React.FC = () => (
  <ul role="menu" className="absolute top-[7px] left-[557px] w-[150px] border border-[#dcdcdc] bg-[#f1f1f1] pt-0.5 pb-px text-[#303030] shadow-md">
    {menuItems.map((item) => (
      <li key={item} role="none">
        <button role="menuitem" className="flex h-4 w-full items-center leading-4">
          <span className={`mr-1.5 ml-px flex h-4 w-4 items-center justify-center ${item === '89-А11' ? 'bg-[#90c8f6]' : ''}`}>
            {item === '89-А11' && (
              <svg className="h-2.5 w-2.5" viewBox="0 0 10 10" fill="none" stroke="#24415c" strokeWidth="1.300">
                <path d="M1 5l3 3 5-6" />
              </svg>
            )}
          </span>
          {item}
        </button>
      </li>
    ))}
  </ul>
);

const App: React.FC = () => (
  <div className="h-screen bg-[linear-gradient(#0a0d10_33px,#b9dce2_33px)] px-px">
    <div className="relative flex h-full flex-col overflow-hidden border-x-3 border-t-2 border-x-[#24566b] border-t-[#1f7083] bg-[#212830] font-['Open_Sans','Noto_Sans',sans-serif] text-[10px] text-[#d5d9dd]">
      <TitleBar />
      <nav className="flex h-[17px] shrink-0 items-center gap-3.5 pl-[3px] whitespace-nowrap text-[#a7aeb7]">
        <a href="#home" className="-mr-2 flex h-full items-center bg-[#3b4453] px-2 text-[#e1e4e7]">Главная</a>
        {tabs.map((tab) => (
          <a key={tab} href="#tab">{tab}</a>
        ))}
      </nav>
      <Ribbon />
      <DocumentTabs />
      <Canvas />
      <ContextMenu />
    </div>
  </div>
);

export default App;
